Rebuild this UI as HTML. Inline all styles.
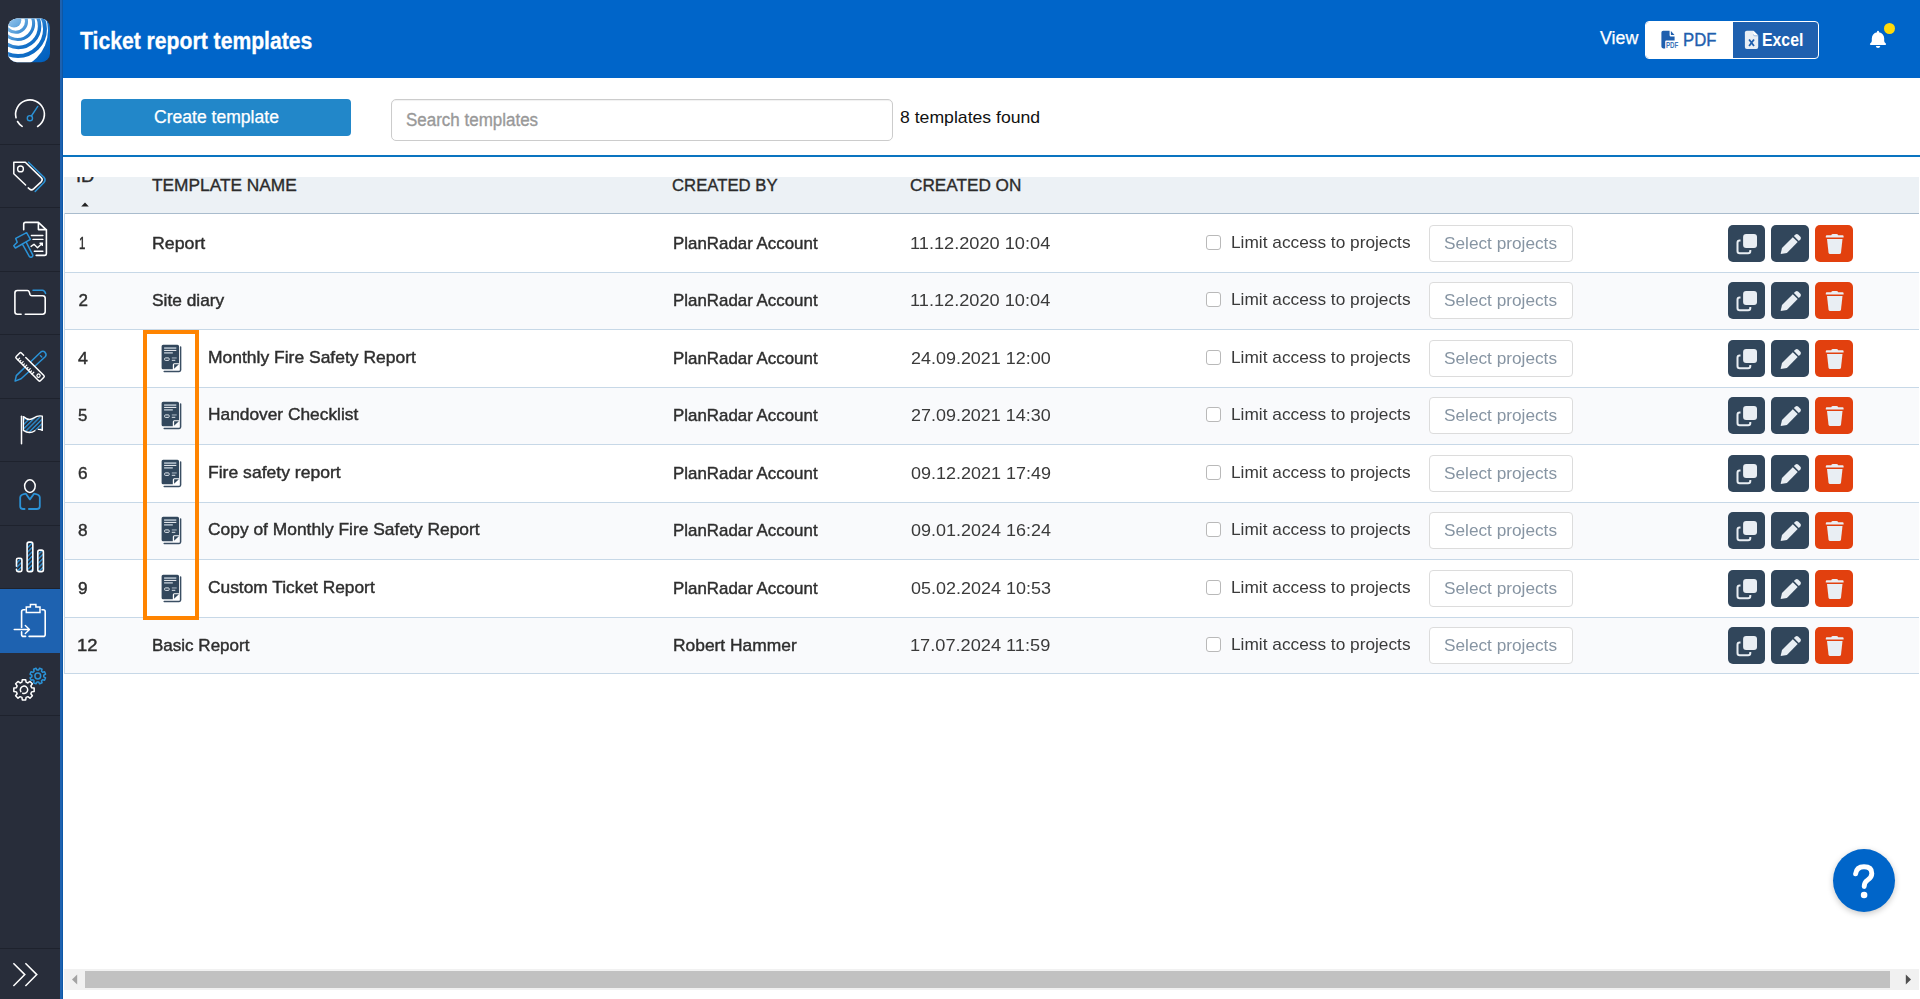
<!DOCTYPE html>
<html lang="en">
<head>
<meta charset="utf-8">
<title>Ticket report templates</title>
<style>
*{box-sizing:border-box;margin:0;padding:0}
html,body{width:1920px;height:999px;overflow:hidden;background:#fff;font-family:"Liberation Sans",sans-serif}
.abs,.t,.ln,.ic{position:absolute}
.t{white-space:pre;line-height:1;transform-origin:0 0;display:block}
/* sidebar */
#side{position:absolute;left:0;top:0;width:60px;height:999px;background:#282d3a}
#strip{position:absolute;left:60px;top:0;width:3px;height:999px;background:linear-gradient(90deg,#1e62b0 0,#1e62b0 2px,#0d57a6 2px,#0d57a6 3px)}
.sep{position:absolute;left:0;width:60px;height:1px;background:#1e222d}
#active{position:absolute;left:0;top:589px;width:62px;height:64px;background:#1e62b0}
.ic{overflow:visible}
/* header */
#top{position:absolute;left:63px;top:0;width:1857px;height:78px;background:#0065c9}
#toggle{position:absolute;left:1645px;top:21px;width:174px;height:38px;border:1px solid #fff;border-radius:4px;background:#1e60af;overflow:hidden}
#toggle .pdf{position:absolute;left:0;top:0;width:87px;height:36px;background:#fff}
/* toolbar */
#create{position:absolute;left:81px;top:99px;width:270px;height:37px;border-radius:4px;background:#2287c9}
#search{position:absolute;left:391px;top:99px;width:502px;height:42px;border:1px solid #ccc;border-radius:5px;background:#fff;box-shadow:inset 0 1px 1px rgba(0,0,0,.06)}
#rule{position:absolute;left:63px;top:155px;width:1857px;height:2px;background:#0a74c0}
/* table */
#thead{position:absolute;left:64px;top:177px;width:1855px;height:36px;background:#ecf1f5}
.ln{left:64px;width:1855px;height:1px;background:#c7d8e7}
.alt{position:absolute;left:65px;width:1854px;background:#f9fafc}
#lborder{position:absolute;left:64px;top:213px;width:1px;height:461px;background:#c7d8e7}
.cb{position:absolute;left:1206px;width:15px;height:15px;border:1px solid #b9b9b9;border-radius:3px;background:#fff}
.sel{position:absolute;left:1429px;width:144px;height:37px;border:1px solid #dcdcdc;border-radius:4px;background:#fff}
.btn{position:absolute;width:38px;height:37px;border-radius:5px;background:#31465b}
.btn.red{background:#e2400e}
#hl{position:absolute;left:143px;top:330px;width:56px;height:290px;border:4px solid #ff8400}
#rowtext{position:absolute;left:0;top:0;width:1px;height:1px;will-change:transform}
/* help */
#help{position:absolute;left:1833px;top:849px;width:62px;height:63px;border-radius:50%;background:#0065c9;box-shadow:0 2px 6px rgba(0,0,0,.22)}
/* scrollbar */
#sb{position:absolute;left:64px;top:969px;width:1855px;height:21px;background:#f1f1f1}
#sbt{position:absolute;left:85px;top:971px;width:1805px;height:17px;background:#c1c1c1}
</style>
</head>
<body>
<div id="side"></div><div id="strip"></div>
<div class="sep" style="top:144px"></div>
<div class="sep" style="top:207px"></div>
<div class="sep" style="top:271px"></div>
<div class="sep" style="top:334px"></div>
<div class="sep" style="top:398px"></div>
<div class="sep" style="top:461px"></div>
<div class="sep" style="top:525px"></div>
<div class="sep" style="top:588px"></div>
<div class="sep" style="top:715px"></div>
<div class="sep" style="top:948px"></div>
<div id="active"></div>
<svg class="ic" style="left:0;top:0" width="64" height="999" viewBox="0 0 64 999" fill="none" stroke-linecap="round" stroke-linejoin="round">
<defs>
<clipPath id="lgc"><rect x="8" y="18.6" width="42" height="43.6" rx="9" ry="9"/></clipPath>
<linearGradient id="lgg" gradientUnits="userSpaceOnUse" x1="10" y1="19" x2="46" y2="60">
<stop offset="0" stop-color="#8fc1ea"/><stop offset="0.22" stop-color="#5ea3dc"/><stop offset="0.5" stop-color="#1672c9"/><stop offset="1" stop-color="#0060bf"/></linearGradient>
<pattern id="hatch" patternUnits="userSpaceOnUse" width="3.1" height="3.1" patternTransform="rotate(-45)"><rect x="0" y="0" width="3.1" height="1.3" fill="#2b92d6"/></pattern>
</defs>
<g clip-path="url(#lgc)">
<rect x="7" y="17" width="45" height="47" fill="url(#lgg)"/>
<circle cx="9.7" cy="30.6" r="38.3" fill="#fff"/>
<circle cx="14.0" cy="20.3" r="7.3" fill="url(#lgg)"/>
<circle cx="18.00" cy="29.00" r="27.0" stroke="url(#lgg)" stroke-width="3.9"/>
<circle cx="18.40" cy="26.20" r="21.2" stroke="url(#lgg)" stroke-width="3.5"/>
<circle cx="17.70" cy="23.60" r="15.9" stroke="url(#lgg)" stroke-width="3.1"/>
<circle cx="15.70" cy="21.50" r="10.8" stroke="url(#lgg)" stroke-width="3.1"/>
</g>
<path d="M22.16 126.38A14.4 14.4 0 0 1 17.53 121.50M16.03 117.78A14.4 14.4 0 1 1 37.63 126.51" stroke="#fff" stroke-width="1.6"/>
<circle cx="29.9" cy="118.2" r="2.6" stroke="#2b92d6" stroke-width="1.4"/><path d="M31.4 116L37.8 106.4" stroke="#2b92d6" stroke-width="1.4"/>
<path d="M25.6 185L13.8 173.8V162.3H25.3L41.2 177.6Q43.2 179.6 41.4 181.6L33.6 188.9Q31.4 190.8 29.4 188.9L28.2 187.9" stroke="#fff" stroke-width="1.5"/>
<circle cx="20.5" cy="168.9" r="2.9" stroke="#fff" stroke-width="1.4"/>
<path d="M28.5 162.3L44 177.2Q46.2 179.8 44 182.4L35.2 191.4" stroke="#2b92d6" stroke-width="1.5"/>
<path d="M23.7 229.8V224.2Q23.7 222.4 25.5 222.4H38.4L46.4 229.8V253.6Q46.4 255.4 44.6 255.4H36.2M38.4 222.4V229.6H46.4" stroke="#fff" stroke-width="1.6"/>
<path d="M31.4 235.5H42.9M33 239.4H42.9M34.3 251.2H42.9M31.1 246.4L34 244.2L37.5 247.7L42.3 243.2M40 243.2H42.3V245.4" stroke="#fff" stroke-width="1.4"/>
<path d="M15.7 238.4L26.6 232.7L30.4 239.4L15.4 248L13.8 245.8L17.2 242.2ZM22.4 244.2L29.4 256.6Q30.4 257.8 31.8 257Q33.2 256.2 32.7 254.8L26.2 242.1" stroke="#2b92d6" stroke-width="1.5"/>
<path d="M21.1 314.2H17.4Q14.9 314.2 14.9 311.7V293Q14.9 290.5 17.4 290.5H27.4Q28.8 290.5 29.2 291.9L30 294.5Q30.4 295.7 31.7 295.7H42.6Q45.2 295.7 45.2 298.3V311.6Q45.2 314.2 42.6 314.2H25.3" stroke="#fff" stroke-width="1.6"/>
<path d="M33 290.3H42.4Q44.6 290.3 45.6 293.4" stroke="#2b92d6" stroke-width="1.5"/>
<path d="M16.3 375.6L40.6 352.2Q43 350.4 45.1 352.4Q47 354.6 45.2 356.8L21.1 378.8L15.1 381.1Z" stroke="#2b92d6" stroke-width="1.5"/>
<path d="M40.3 355.6L41.8 357" stroke="#2b92d6" stroke-width="1.3"/>
<g transform="translate(30.05 366.9) rotate(45)">
<rect x="-17.1" y="-3.65" width="34.2" height="7.3" rx="1.2" fill="#282d3a" stroke="none"/>
<path d="M-12.700000000000001 -3.65H-15.900000000000002Q-17.1 -3.65 -17.1 -2.45V2.45Q-17.1 3.65 -15.900000000000002 3.65H15.900000000000002Q17.1 3.65 17.1 2.45V-2.45Q17.1 -3.65 15.900000000000002 -3.65H-9.700000000000001" stroke="#fff" stroke-width="1.5"/>
<path d="M-13.6 3.65V1.1M-11.1 3.65V1.9M-8.6 3.65V1.1M-6.1 3.65V1.9M-3.6 3.65V1.1M-1.1 3.65V1.9M1.4 3.65V1.1M3.9 3.65V1.9M6.4 3.65V1.1" stroke="#fff" stroke-width="1.2"/>
<circle cx="12.2" cy="0.2" r="1.6" stroke="#fff" stroke-width="1.2"/>
</g>
<path d="M23.9 417.2Q28.8 421.6 33.5 418.5Q38 415.6 41.8 416.8V429.8Q38 428.4 34.9 430.4Q29.5 434 23.9 430Z" fill="url(#hatch)" stroke="none"/>
<path d="M21.5 416.2V443.8" stroke="#fff" stroke-width="1.5"/>
<path d="M34.9 430.7Q29.5 434.6 23.4 430.4V416.6Q28.8 421.3 33.5 418.2Q38.2 415 42.3 416.2V430.4Q40.4 429.2 38.4 429.4" stroke="#fff" stroke-width="1.4"/>
<ellipse cx="29.9" cy="486.1" rx="5.3" ry="6.3" stroke="#fff" stroke-width="1.5"/>
<path d="M24.6 509H22.9Q20.2 509 20.2 506.3V497.5Q20.2 494.6 25.9 493.7L29.9 499.4L34 493.7Q39.8 494.6 39.8 497.5V506.3Q39.8 509 37.1 509H28.9" stroke="#2b92d6" stroke-width="1.8"/>
<rect x="16.9" y="558.8" width="4.6" height="12.2" fill="url(#hatch)" stroke="none"/>
<rect x="27.5" y="542.6999999999999" width="4.9" height="28.3" fill="url(#hatch)" stroke="none"/>
<rect x="38.2" y="550.6999999999999" width="4.8" height="20.3" fill="url(#hatch)" stroke="none"/>
<path d="M16.5 566.2V559.8Q16.5 558.2 18.1 558.2H20.3Q21.9 558.2 21.9 559.8V570Q21.9 571.6 20.3 571.6H18.1Q16.5 571.6 16.5 570V569.2" stroke="#fff" stroke-width="1.6"/>
<rect x="27.1" y="542.1" width="5.7" height="29.5" rx="1.8" stroke="#fff" stroke-width="1.6"/>
<rect x="37.8" y="550.1" width="5.6" height="21.5" rx="1.8" stroke="#fff" stroke-width="1.6"/>
<path d="M21.6 627.4V611.8Q21.6 609.8 23.6 609.8H25M42 609.8H43.2Q45.2 609.8 45.2 611.8V634.4Q45.2 636.4 43.2 636.4H29.1M25.6 636.4H23.6Q21.6 636.4 21.6 634.4V631.9" stroke="#fff" stroke-width="1.6"/>
<path d="M26.3 612.4V606.9H30.4V604.6H35.9V606.9H40V612.4Z" stroke="#fff" stroke-width="1.5" stroke-linejoin="miter"/>
<path d="M14.2 629.5H29.3M25.3 625.5L29.5 629.5L25.3 633.5" stroke="#fff" stroke-width="1.4"/>
<path d="M21.92 682.18L22.31 679.64L25.69 679.64L26.08 682.18L27.91 682.94L29.99 681.42L32.38 683.81L30.86 685.89L31.62 687.72L34.16 688.11L34.16 691.49L31.62 691.88L30.86 693.71L32.38 695.79L29.99 698.18L27.91 696.66L26.08 697.42L25.69 699.96L22.31 699.96L21.92 697.42L20.09 696.66L18.01 698.18L15.62 695.79L17.14 693.71L16.38 691.88L13.84 691.49L13.84 688.11L16.38 687.72L17.14 685.89L15.62 683.81L18.01 681.42L20.09 682.94Z" stroke="#fff" stroke-width="1.5" stroke-linejoin="round"/>
<path d="M20.80 691.65A3.7 3.7 0 1 1 22.73 693.28" stroke="#fff" stroke-width="1.5"/>
<path d="M38.55 670.05L39.61 668.21L42.03 669.21L41.48 671.26L42.54 672.32L44.59 671.77L45.59 674.19L43.75 675.25L43.75 676.75L45.59 677.81L44.59 680.23L42.54 679.68L41.48 680.74L42.03 682.79L39.61 683.79L38.55 681.95L37.05 681.95L35.99 683.79L33.57 682.79L34.12 680.74L33.06 679.68L31.01 680.23L30.01 677.81L31.85 676.75L31.85 675.25L30.01 674.19L31.01 671.77L33.06 672.32L34.12 671.26L33.57 669.21L35.99 668.21L37.05 670.05Z" stroke="#2b92d6" stroke-width="1.5" stroke-linejoin="round"/>
<circle cx="37.8" cy="676" r="2.9" stroke="#2b92d6" stroke-width="1.5"/>
<path d="M13.4 963.2L24.8 974.6L13.4 986M25.4 963.2L36.8 974.6L25.4 986" stroke="#fff" stroke-width="1.5" stroke-linecap="butt" stroke-linejoin="miter"/>
</svg>
<div id="top"></div>
<div id="toggle"><div class="pdf"></div></div>
<svg class="ic" style="left:1660px;top:30px" width="20" height="20" viewBox="0 0 20 20">
<path d="M3.2 0.8H9.6V5.2Q9.6 6.4 10.8 6.4H14.6V10.4H6.2Q5.2 10.4 5.2 11.4V18.4H3.2Q1.4 18.4 1.4 16.6V2.6Q1.4 0.8 3.2 0.8Z" fill="#1f5fae"/>
<path d="M10.9 0.9L14.5 5.1H11.6Q10.9 5.1 10.9 4.4Z" fill="#1f5fae"/>
<text x="5.9" y="18.3" font-family="Liberation Sans, sans-serif" font-weight="700" font-size="8.200" fill="#3d76bb" textLength="12.400" lengthAdjust="spacingAndGlyphs">PDF</text>
</svg>
<svg class="ic" style="left:1744px;top:30px" width="16" height="20" viewBox="0 0 16 20">
<path d="M2.800 0.700H9.400L14.200 5.500V17Q14.200 18.900 12.300 18.900H2.800Q0.900 18.900 0.900 17V2.600Q0.900 0.700 2.800 0.700Z" fill="#e8eef5"/>
<path d="M9.400 0.700V4.400Q9.400 5.500 10.500 5.500H14.200Z" fill="#fff"/><path d="M9.400 4.400Q9.400 5.800 10.800 5.800H14.200" fill="none" stroke="#7ea3d2" stroke-width="0.700"/>
<path d="M5.100 9.500L10 16M10 9.500L5.100 16" stroke="#1f5fae" stroke-width="1.800" fill="none"/>
</svg>
<svg class="ic" style="left:1866px;top:28px" width="24" height="24" viewBox="0 0 24 24">
<path d="M12 2.800Q13 2.800 13 3.800V4.300Q18 5.500 18.200 10.500V13Q18.300 14.200 19.600 15.300Q20.400 16 20 16.600Q19.800 17 19.200 17H4.800Q4.200 17 4 16.600Q3.600 16 4.400 15.300Q5.700 14.200 5.800 13V10.500Q6 5.500 11 4.300V3.800Q11 2.800 12 2.800Z" fill="#fff"/>
<path d="M9.800 18H14.300Q14 20.100 12.050 20.100Q10.100 20.100 9.800 18Z" fill="#fff"/>
</svg>
<div class="abs" style="left:1884px;top:23px;width:11px;height:11px;border-radius:50%;background:#ffda0a"></div>
<div id="create"></div><div id="search"></div><div id="rule"></div>
<div id="thead"></div>
<div class="ln" style="top:213px;background:#a9bccd"></div>
<div class="alt" style="top:273px;height:57px"></div>
<div class="alt" style="top:388px;height:56px"></div>
<div class="alt" style="top:503px;height:57px"></div>
<div class="alt" style="top:618px;height:56px"></div>
<div class="ln" style="top:272px"></div>
<div class="ln" style="top:329px"></div>
<div class="ln" style="top:387px"></div>
<div class="ln" style="top:444px"></div>
<div class="ln" style="top:502px"></div>
<div class="ln" style="top:559px"></div>
<div class="ln" style="top:617px"></div>
<div class="ln" style="top:673px"></div>
<div id="lborder"></div>
<svg class="ic" style="left:81px;top:202px" width="8" height="5" viewBox="0 0 8 5"><path d="M0.2 4.4L4 0.5L7.8 4.4Z" fill="#222"/></svg>
<div class="cb" style="top:235px"></div>
<div class="sel" style="top:225px"></div>
<div class="btn" style="left:1728px;top:225px;width:37px"><svg width="37" height="37" viewBox="0.5 0 37 37" style="display:block"><rect x="15.6" y="9.100" width="13.900" height="14" rx="3" fill="#e9eef3"/><path d="M13 15.600H12.200Q10 15.600 10 17.800V26Q10 28.200 12.200 28.200H20.600Q22.800 28.200 22.800 26V25" fill="none" stroke="#e9eef3" stroke-width="2"/></svg></div>
<div class="btn" style="left:1771px;top:225px"><svg width="38" height="37" viewBox="0 0 38 37" style="display:block"><path d="M9.600 29.100L11 23L21.800 12.200L26.700 17.100L15.900 27.900Z" fill="#e9eef3"/><path d="M22.900 11.100L24.500 9.500Q25.800 8.300 27.100 9.500L29.400 11.800Q30.600 13.100 29.400 14.400L27.800 16Z" fill="#e9eef3"/></svg></div>
<div class="btn red" style="left:1815px;top:225px"><svg width="38" height="37" viewBox="0 0 38 37" style="display:block"><path d="M10.800 12.600V11.300Q10.800 10.300 11.800 10.300H16.200Q16.600 8.900 18 8.900H21.400Q22.800 8.900 23.200 10.300H27.600Q28.600 10.300 28.600 11.300V12.600Z" fill="#e9eef3"/><path d="M12 14.100H27.500L26 27.400Q25.800 28.900 24.300 28.900H15.200Q13.700 28.900 13.500 27.400Z" fill="#e9eef3"/></svg></div>
<div class="cb" style="top:292px"></div>
<div class="sel" style="top:282px"></div>
<div class="btn" style="left:1728px;top:282px;width:37px"><svg width="37" height="37" viewBox="0.5 0 37 37" style="display:block"><rect x="15.6" y="9.100" width="13.900" height="14" rx="3" fill="#e9eef3"/><path d="M13 15.600H12.200Q10 15.600 10 17.800V26Q10 28.200 12.200 28.200H20.600Q22.800 28.200 22.800 26V25" fill="none" stroke="#e9eef3" stroke-width="2"/></svg></div>
<div class="btn" style="left:1771px;top:282px"><svg width="38" height="37" viewBox="0 0 38 37" style="display:block"><path d="M9.600 29.100L11 23L21.800 12.200L26.700 17.100L15.900 27.900Z" fill="#e9eef3"/><path d="M22.900 11.100L24.500 9.500Q25.800 8.300 27.100 9.500L29.400 11.800Q30.600 13.100 29.400 14.400L27.800 16Z" fill="#e9eef3"/></svg></div>
<div class="btn red" style="left:1815px;top:282px"><svg width="38" height="37" viewBox="0 0 38 37" style="display:block"><path d="M10.800 12.600V11.300Q10.800 10.300 11.800 10.300H16.200Q16.600 8.900 18 8.900H21.400Q22.800 8.900 23.200 10.300H27.600Q28.600 10.300 28.600 11.300V12.600Z" fill="#e9eef3"/><path d="M12 14.100H27.500L26 27.400Q25.800 28.900 24.300 28.900H15.200Q13.700 28.900 13.500 27.400Z" fill="#e9eef3"/></svg></div>
<div class="cb" style="top:350px"></div>
<div class="sel" style="top:340px"></div>
<div class="btn" style="left:1728px;top:340px;width:37px"><svg width="37" height="37" viewBox="0.5 0 37 37" style="display:block"><rect x="15.6" y="9.100" width="13.900" height="14" rx="3" fill="#e9eef3"/><path d="M13 15.600H12.200Q10 15.600 10 17.800V26Q10 28.200 12.200 28.200H20.600Q22.800 28.200 22.800 26V25" fill="none" stroke="#e9eef3" stroke-width="2"/></svg></div>
<div class="btn" style="left:1771px;top:340px"><svg width="38" height="37" viewBox="0 0 38 37" style="display:block"><path d="M9.600 29.100L11 23L21.800 12.200L26.700 17.100L15.900 27.900Z" fill="#e9eef3"/><path d="M22.900 11.100L24.500 9.500Q25.800 8.300 27.100 9.500L29.400 11.800Q30.600 13.100 29.400 14.400L27.800 16Z" fill="#e9eef3"/></svg></div>
<div class="btn red" style="left:1815px;top:340px"><svg width="38" height="37" viewBox="0 0 38 37" style="display:block"><path d="M10.800 12.600V11.300Q10.800 10.300 11.800 10.300H16.200Q16.600 8.900 18 8.900H21.400Q22.800 8.900 23.200 10.300H27.600Q28.600 10.300 28.600 11.300V12.600Z" fill="#e9eef3"/><path d="M12 14.100H27.500L26 27.400Q25.800 28.900 24.300 28.900H15.200Q13.700 28.900 13.500 27.400Z" fill="#e9eef3"/></svg></div>
<svg class="ic" style="left:161px;top:344px" width="22" height="29" viewBox="0 0 22 29"><path d="M19.600 3V26Q19.600 27.400 18.200 27.400H3.200" fill="none" stroke="#3a4e63" stroke-width="1.500" stroke-linecap="round"/><path d="M2.100 0.800H16.500Q18 0.800 18 2.300V19.300H13.300Q11.800 19.300 11.800 20.800V25.300H2.100Q0.600 25.300 0.600 23.800V2.300Q0.600 0.800 2.100 0.800Z" fill="#32475c"/><path d="M13.100 20.300H17.900L13.100 24.700Z" fill="#32475c"/>
<rect x="3.100" y="3.200" width="12.200" height="1.800" fill="#a4b1be"/><rect x="3.100" y="5.900" width="12.200" height="1" fill="#f4f6f9"/><rect x="3.100" y="8" width="8.700" height="1.700" fill="#a4b1be"/><rect x="3.600" y="13.900" width="4.600" height="2.500" rx="0.900" fill="none" stroke="#e1e6ec" stroke-width="1"/><rect x="10.800" y="13.400" width="4.900" height="1.100" fill="#a4b1be"/><rect x="10.800" y="15.800" width="3.500" height="1" fill="#e1e6ec"/></svg>
<div class="cb" style="top:407px"></div>
<div class="sel" style="top:397px"></div>
<div class="btn" style="left:1728px;top:397px;width:37px"><svg width="37" height="37" viewBox="0.5 0 37 37" style="display:block"><rect x="15.6" y="9.100" width="13.900" height="14" rx="3" fill="#e9eef3"/><path d="M13 15.600H12.200Q10 15.600 10 17.800V26Q10 28.200 12.200 28.200H20.600Q22.800 28.200 22.800 26V25" fill="none" stroke="#e9eef3" stroke-width="2"/></svg></div>
<div class="btn" style="left:1771px;top:397px"><svg width="38" height="37" viewBox="0 0 38 37" style="display:block"><path d="M9.600 29.100L11 23L21.800 12.200L26.700 17.100L15.900 27.900Z" fill="#e9eef3"/><path d="M22.900 11.100L24.500 9.500Q25.800 8.300 27.100 9.500L29.400 11.800Q30.600 13.100 29.400 14.400L27.800 16Z" fill="#e9eef3"/></svg></div>
<div class="btn red" style="left:1815px;top:397px"><svg width="38" height="37" viewBox="0 0 38 37" style="display:block"><path d="M10.800 12.600V11.300Q10.800 10.300 11.800 10.300H16.200Q16.600 8.900 18 8.900H21.400Q22.800 8.900 23.200 10.300H27.600Q28.600 10.300 28.600 11.300V12.600Z" fill="#e9eef3"/><path d="M12 14.100H27.500L26 27.400Q25.800 28.900 24.300 28.900H15.200Q13.700 28.900 13.500 27.400Z" fill="#e9eef3"/></svg></div>
<svg class="ic" style="left:161px;top:401px" width="22" height="29" viewBox="0 0 22 29"><path d="M19.600 3V26Q19.600 27.400 18.200 27.400H3.200" fill="none" stroke="#3a4e63" stroke-width="1.500" stroke-linecap="round"/><path d="M2.100 0.800H16.500Q18 0.800 18 2.300V19.300H13.300Q11.800 19.300 11.800 20.800V25.300H2.100Q0.600 25.300 0.600 23.800V2.300Q0.600 0.800 2.100 0.800Z" fill="#32475c"/><path d="M13.100 20.300H17.900L13.100 24.700Z" fill="#32475c"/>
<rect x="3.100" y="3.200" width="12.200" height="1.800" fill="#a4b1be"/><rect x="3.100" y="5.900" width="12.200" height="1" fill="#f4f6f9"/><rect x="3.100" y="8" width="8.700" height="1.700" fill="#a4b1be"/><rect x="3.600" y="13.900" width="4.600" height="2.500" rx="0.900" fill="none" stroke="#e1e6ec" stroke-width="1"/><rect x="10.800" y="13.400" width="4.900" height="1.100" fill="#a4b1be"/><rect x="10.800" y="15.800" width="3.500" height="1" fill="#e1e6ec"/></svg>
<div class="cb" style="top:465px"></div>
<div class="sel" style="top:455px"></div>
<div class="btn" style="left:1728px;top:455px;width:37px"><svg width="37" height="37" viewBox="0.5 0 37 37" style="display:block"><rect x="15.6" y="9.100" width="13.900" height="14" rx="3" fill="#e9eef3"/><path d="M13 15.600H12.200Q10 15.600 10 17.800V26Q10 28.200 12.200 28.200H20.600Q22.800 28.200 22.800 26V25" fill="none" stroke="#e9eef3" stroke-width="2"/></svg></div>
<div class="btn" style="left:1771px;top:455px"><svg width="38" height="37" viewBox="0 0 38 37" style="display:block"><path d="M9.600 29.100L11 23L21.800 12.200L26.700 17.100L15.900 27.900Z" fill="#e9eef3"/><path d="M22.900 11.100L24.500 9.500Q25.800 8.300 27.100 9.500L29.400 11.800Q30.600 13.100 29.400 14.400L27.800 16Z" fill="#e9eef3"/></svg></div>
<div class="btn red" style="left:1815px;top:455px"><svg width="38" height="37" viewBox="0 0 38 37" style="display:block"><path d="M10.800 12.600V11.300Q10.800 10.300 11.800 10.300H16.200Q16.600 8.900 18 8.900H21.400Q22.800 8.900 23.200 10.300H27.600Q28.600 10.300 28.600 11.300V12.600Z" fill="#e9eef3"/><path d="M12 14.100H27.500L26 27.400Q25.800 28.900 24.300 28.900H15.200Q13.700 28.900 13.500 27.400Z" fill="#e9eef3"/></svg></div>
<svg class="ic" style="left:161px;top:459px" width="22" height="29" viewBox="0 0 22 29"><path d="M19.600 3V26Q19.600 27.400 18.200 27.400H3.200" fill="none" stroke="#3a4e63" stroke-width="1.500" stroke-linecap="round"/><path d="M2.100 0.800H16.500Q18 0.800 18 2.300V19.300H13.300Q11.800 19.300 11.800 20.800V25.300H2.100Q0.600 25.300 0.600 23.800V2.300Q0.600 0.800 2.100 0.800Z" fill="#32475c"/><path d="M13.100 20.300H17.900L13.100 24.700Z" fill="#32475c"/>
<rect x="3.100" y="3.200" width="12.200" height="1.800" fill="#a4b1be"/><rect x="3.100" y="5.900" width="12.200" height="1" fill="#f4f6f9"/><rect x="3.100" y="8" width="8.700" height="1.700" fill="#a4b1be"/><rect x="3.600" y="13.900" width="4.600" height="2.500" rx="0.900" fill="none" stroke="#e1e6ec" stroke-width="1"/><rect x="10.800" y="13.400" width="4.900" height="1.100" fill="#a4b1be"/><rect x="10.800" y="15.800" width="3.500" height="1" fill="#e1e6ec"/></svg>
<div class="cb" style="top:522px"></div>
<div class="sel" style="top:512px"></div>
<div class="btn" style="left:1728px;top:512px;width:37px"><svg width="37" height="37" viewBox="0.5 0 37 37" style="display:block"><rect x="15.6" y="9.100" width="13.900" height="14" rx="3" fill="#e9eef3"/><path d="M13 15.600H12.200Q10 15.600 10 17.800V26Q10 28.200 12.200 28.200H20.600Q22.800 28.200 22.800 26V25" fill="none" stroke="#e9eef3" stroke-width="2"/></svg></div>
<div class="btn" style="left:1771px;top:512px"><svg width="38" height="37" viewBox="0 0 38 37" style="display:block"><path d="M9.600 29.100L11 23L21.800 12.200L26.700 17.100L15.900 27.900Z" fill="#e9eef3"/><path d="M22.900 11.100L24.500 9.500Q25.800 8.300 27.100 9.500L29.400 11.800Q30.600 13.100 29.400 14.400L27.800 16Z" fill="#e9eef3"/></svg></div>
<div class="btn red" style="left:1815px;top:512px"><svg width="38" height="37" viewBox="0 0 38 37" style="display:block"><path d="M10.800 12.600V11.300Q10.800 10.300 11.800 10.300H16.200Q16.600 8.900 18 8.900H21.400Q22.800 8.900 23.200 10.300H27.600Q28.600 10.300 28.600 11.300V12.600Z" fill="#e9eef3"/><path d="M12 14.100H27.500L26 27.400Q25.800 28.900 24.300 28.900H15.200Q13.700 28.900 13.500 27.400Z" fill="#e9eef3"/></svg></div>
<svg class="ic" style="left:161px;top:516px" width="22" height="29" viewBox="0 0 22 29"><path d="M19.600 3V26Q19.600 27.400 18.200 27.400H3.200" fill="none" stroke="#3a4e63" stroke-width="1.500" stroke-linecap="round"/><path d="M2.100 0.800H16.500Q18 0.800 18 2.300V19.300H13.300Q11.800 19.300 11.800 20.800V25.300H2.100Q0.600 25.300 0.600 23.800V2.300Q0.600 0.800 2.100 0.800Z" fill="#32475c"/><path d="M13.100 20.300H17.900L13.100 24.700Z" fill="#32475c"/>
<rect x="3.100" y="3.200" width="12.200" height="1.800" fill="#a4b1be"/><rect x="3.100" y="5.900" width="12.200" height="1" fill="#f4f6f9"/><rect x="3.100" y="8" width="8.700" height="1.700" fill="#a4b1be"/><rect x="3.600" y="13.900" width="4.600" height="2.500" rx="0.900" fill="none" stroke="#e1e6ec" stroke-width="1"/><rect x="10.800" y="13.400" width="4.900" height="1.100" fill="#a4b1be"/><rect x="10.800" y="15.800" width="3.500" height="1" fill="#e1e6ec"/></svg>
<div class="cb" style="top:580px"></div>
<div class="sel" style="top:570px"></div>
<div class="btn" style="left:1728px;top:570px;width:37px"><svg width="37" height="37" viewBox="0.5 0 37 37" style="display:block"><rect x="15.6" y="9.100" width="13.900" height="14" rx="3" fill="#e9eef3"/><path d="M13 15.600H12.200Q10 15.600 10 17.800V26Q10 28.200 12.200 28.200H20.600Q22.800 28.200 22.800 26V25" fill="none" stroke="#e9eef3" stroke-width="2"/></svg></div>
<div class="btn" style="left:1771px;top:570px"><svg width="38" height="37" viewBox="0 0 38 37" style="display:block"><path d="M9.600 29.100L11 23L21.800 12.200L26.700 17.100L15.900 27.900Z" fill="#e9eef3"/><path d="M22.900 11.100L24.500 9.500Q25.800 8.300 27.100 9.500L29.400 11.800Q30.600 13.100 29.400 14.400L27.800 16Z" fill="#e9eef3"/></svg></div>
<div class="btn red" style="left:1815px;top:570px"><svg width="38" height="37" viewBox="0 0 38 37" style="display:block"><path d="M10.800 12.600V11.300Q10.800 10.300 11.800 10.300H16.200Q16.600 8.900 18 8.900H21.400Q22.800 8.900 23.200 10.300H27.600Q28.600 10.300 28.600 11.300V12.600Z" fill="#e9eef3"/><path d="M12 14.100H27.500L26 27.400Q25.800 28.900 24.300 28.900H15.200Q13.700 28.900 13.500 27.400Z" fill="#e9eef3"/></svg></div>
<svg class="ic" style="left:161px;top:574px" width="22" height="29" viewBox="0 0 22 29"><path d="M19.600 3V26Q19.600 27.400 18.200 27.400H3.200" fill="none" stroke="#3a4e63" stroke-width="1.500" stroke-linecap="round"/><path d="M2.100 0.800H16.500Q18 0.800 18 2.300V19.300H13.300Q11.800 19.300 11.800 20.800V25.300H2.100Q0.600 25.300 0.600 23.800V2.300Q0.600 0.800 2.100 0.800Z" fill="#32475c"/><path d="M13.100 20.300H17.900L13.100 24.700Z" fill="#32475c"/>
<rect x="3.100" y="3.200" width="12.200" height="1.800" fill="#a4b1be"/><rect x="3.100" y="5.900" width="12.200" height="1" fill="#f4f6f9"/><rect x="3.100" y="8" width="8.700" height="1.700" fill="#a4b1be"/><rect x="3.600" y="13.900" width="4.600" height="2.500" rx="0.900" fill="none" stroke="#e1e6ec" stroke-width="1"/><rect x="10.800" y="13.400" width="4.900" height="1.100" fill="#a4b1be"/><rect x="10.800" y="15.800" width="3.500" height="1" fill="#e1e6ec"/></svg>
<div class="cb" style="top:637px"></div>
<div class="sel" style="top:627px"></div>
<div class="btn" style="left:1728px;top:627px;width:37px"><svg width="37" height="37" viewBox="0.5 0 37 37" style="display:block"><rect x="15.6" y="9.100" width="13.900" height="14" rx="3" fill="#e9eef3"/><path d="M13 15.600H12.200Q10 15.600 10 17.800V26Q10 28.200 12.200 28.200H20.600Q22.800 28.200 22.800 26V25" fill="none" stroke="#e9eef3" stroke-width="2"/></svg></div>
<div class="btn" style="left:1771px;top:627px"><svg width="38" height="37" viewBox="0 0 38 37" style="display:block"><path d="M9.600 29.100L11 23L21.800 12.200L26.700 17.100L15.900 27.900Z" fill="#e9eef3"/><path d="M22.900 11.100L24.500 9.500Q25.800 8.300 27.100 9.500L29.400 11.800Q30.600 13.100 29.400 14.400L27.800 16Z" fill="#e9eef3"/></svg></div>
<div class="btn red" style="left:1815px;top:627px"><svg width="38" height="37" viewBox="0 0 38 37" style="display:block"><path d="M10.800 12.600V11.300Q10.800 10.300 11.800 10.300H16.200Q16.600 8.900 18 8.900H21.400Q22.800 8.900 23.200 10.300H27.600Q28.600 10.300 28.600 11.300V12.600Z" fill="#e9eef3"/><path d="M12 14.100H27.500L26 27.400Q25.800 28.900 24.300 28.900H15.200Q13.700 28.900 13.500 27.400Z" fill="#e9eef3"/></svg></div>
<div id="hl"></div>
<span class="t" style="left:80.30px;top:30.00px;font-size:23px;font-weight:700;color:#fff;transform:scaleX(0.9195);-webkit-text-stroke:0.3px #fff;">Ticket report templates</span>
<span class="t" style="left:1600.10px;top:29.00px;font-size:18px;font-weight:400;color:#fff;transform:scaleX(0.9902);-webkit-text-stroke:0.25px #fff;">View</span>
<span class="t" style="left:1683.47px;top:31.00px;font-size:18px;font-weight:400;color:#1f5fae;transform:scaleX(0.9284);-webkit-text-stroke:0.4px #1f5fae;">PDF</span>
<span class="t" style="left:1762.32px;top:31.00px;font-size:18px;font-weight:700;color:#fff;transform:scaleX(0.8793);">Excel</span>
<span class="t" style="left:154.30px;top:109.00px;font-size:17.5px;font-weight:400;color:#fff;transform:scaleX(1.0034);-webkit-text-stroke:0.25px #fff;">Create template</span>
<span class="t" style="left:406.40px;top:111.00px;font-size:18px;font-weight:400;color:#999;transform:scaleX(0.9431);-webkit-text-stroke:0.35px #999;">Search templates</span>
<span class="t" style="left:899.90px;top:109.00px;font-size:17px;font-weight:400;color:#111;transform:scaleX(1.0372);">8 templates found</span>
<span class="t" style="left:151.60px;top:177.00px;font-size:17px;font-weight:400;color:#2b2b2b;transform:scaleX(1.0171);-webkit-text-stroke:0.35px #2b2b2b;">TEMPLATE NAME</span>
<span class="t" style="left:672.10px;top:177.00px;font-size:17px;font-weight:400;color:#2b2b2b;transform:scaleX(0.9829);-webkit-text-stroke:0.35px #2b2b2b;">CREATED BY</span>
<span class="t" style="left:909.90px;top:177.00px;font-size:17px;font-weight:400;color:#2b2b2b;transform:scaleX(1.0109);-webkit-text-stroke:0.35px #2b2b2b;">CREATED ON</span>
<span class="t" style="left:75.82px;top:168.00px;font-size:17px;font-weight:400;color:#2b2b2b;transform:scaleX(1.0812);-webkit-text-stroke:0.35px #2b2b2b;clip-path:inset(9px -2px -2px -2px);">ID</span>
<div id="rowtext">
<span class="t" style="left:79.12px;top:235.00px;font-size:17px;font-weight:400;color:#2e2e2e;transform:scaleX(0.6750);-webkit-text-stroke:0.42px #2e2e2e;">1</span>
<span class="t" style="left:151.56px;top:235.00px;font-size:17px;font-weight:400;color:#2e2e2e;transform:scaleX(1.0437);-webkit-text-stroke:0.42px #2e2e2e;">Report</span>
<span class="t" style="left:673.01px;top:235.00px;font-size:17px;font-weight:400;color:#2e2e2e;transform:scaleX(0.9935);-webkit-text-stroke:0.42px #2e2e2e;">PlanRadar Account</span>
<span class="t" style="left:910.43px;top:235.00px;font-size:17px;font-weight:400;color:#3a3a3a;transform:scaleX(1.0700);">11.12.2020 10:04</span>
<span class="t" style="left:1230.78px;top:234.00px;font-size:17px;font-weight:400;color:#3a3a3a;transform:scaleX(1.0161);">Limit access to projects</span>
<span class="t" style="left:1444.10px;top:235.00px;font-size:17px;font-weight:400;color:#8795a3;transform:scaleX(1.0135);">Select projects</span>
<span class="t" style="left:78.40px;top:292.00px;font-size:17px;font-weight:400;color:#2e2e2e;transform:scaleX(1.0000);-webkit-text-stroke:0.42px #2e2e2e;">2</span>
<span class="t" style="left:151.70px;top:292.00px;font-size:17px;font-weight:400;color:#2e2e2e;transform:scaleX(1.0187);-webkit-text-stroke:0.42px #2e2e2e;">Site diary</span>
<span class="t" style="left:673.01px;top:292.00px;font-size:17px;font-weight:400;color:#2e2e2e;transform:scaleX(0.9935);-webkit-text-stroke:0.42px #2e2e2e;">PlanRadar Account</span>
<span class="t" style="left:910.43px;top:292.00px;font-size:17px;font-weight:400;color:#3a3a3a;transform:scaleX(1.0700);">11.12.2020 10:04</span>
<span class="t" style="left:1230.78px;top:291.00px;font-size:17px;font-weight:400;color:#3a3a3a;transform:scaleX(1.0161);">Limit access to projects</span>
<span class="t" style="left:1444.10px;top:292.00px;font-size:17px;font-weight:400;color:#8795a3;transform:scaleX(1.0135);">Select projects</span>
<span class="t" style="left:78.40px;top:350.00px;font-size:17px;font-weight:400;color:#2e2e2e;transform:scaleX(1.0444);-webkit-text-stroke:0.42px #2e2e2e;">4</span>
<span class="t" style="left:207.97px;top:349.00px;font-size:17px;font-weight:400;color:#2e2e2e;transform:scaleX(1.0280);-webkit-text-stroke:0.42px #2e2e2e;">Monthly Fire Safety Report</span>
<span class="t" style="left:673.01px;top:350.00px;font-size:17px;font-weight:400;color:#2e2e2e;transform:scaleX(0.9935);-webkit-text-stroke:0.42px #2e2e2e;">PlanRadar Account</span>
<span class="t" style="left:911.00px;top:350.00px;font-size:17px;font-weight:400;color:#3a3a3a;transform:scaleX(1.0554);">24.09.2021 12:00</span>
<span class="t" style="left:1230.78px;top:349.00px;font-size:17px;font-weight:400;color:#3a3a3a;transform:scaleX(1.0161);">Limit access to projects</span>
<span class="t" style="left:1444.10px;top:350.00px;font-size:17px;font-weight:400;color:#8795a3;transform:scaleX(1.0135);">Select projects</span>
<span class="t" style="left:78.40px;top:407.00px;font-size:17px;font-weight:400;color:#2e2e2e;transform:scaleX(0.9889);-webkit-text-stroke:0.42px #2e2e2e;">5</span>
<span class="t" style="left:207.98px;top:406.00px;font-size:17px;font-weight:400;color:#2e2e2e;transform:scaleX(1.0193);-webkit-text-stroke:0.42px #2e2e2e;">Handover Checklist</span>
<span class="t" style="left:673.01px;top:407.00px;font-size:17px;font-weight:400;color:#2e2e2e;transform:scaleX(0.9935);-webkit-text-stroke:0.42px #2e2e2e;">PlanRadar Account</span>
<span class="t" style="left:911.00px;top:407.00px;font-size:17px;font-weight:400;color:#3a3a3a;transform:scaleX(1.0554);">27.09.2021 14:30</span>
<span class="t" style="left:1230.78px;top:406.00px;font-size:17px;font-weight:400;color:#3a3a3a;transform:scaleX(1.0161);">Limit access to projects</span>
<span class="t" style="left:1444.10px;top:407.00px;font-size:17px;font-weight:400;color:#8795a3;transform:scaleX(1.0135);">Select projects</span>
<span class="t" style="left:78.40px;top:465.00px;font-size:17px;font-weight:400;color:#2e2e2e;transform:scaleX(1.0111);-webkit-text-stroke:0.42px #2e2e2e;">6</span>
<span class="t" style="left:207.97px;top:464.00px;font-size:17px;font-weight:400;color:#2e2e2e;transform:scaleX(1.0324);-webkit-text-stroke:0.42px #2e2e2e;">Fire safety report</span>
<span class="t" style="left:673.01px;top:465.00px;font-size:17px;font-weight:400;color:#2e2e2e;transform:scaleX(0.9935);-webkit-text-stroke:0.42px #2e2e2e;">PlanRadar Account</span>
<span class="t" style="left:910.70px;top:465.00px;font-size:17px;font-weight:400;color:#3a3a3a;transform:scaleX(1.0577);">09.12.2021 17:49</span>
<span class="t" style="left:1230.78px;top:464.00px;font-size:17px;font-weight:400;color:#3a3a3a;transform:scaleX(1.0161);">Limit access to projects</span>
<span class="t" style="left:1444.10px;top:465.00px;font-size:17px;font-weight:400;color:#8795a3;transform:scaleX(1.0135);">Select projects</span>
<span class="t" style="left:78.40px;top:522.00px;font-size:17px;font-weight:400;color:#2e2e2e;transform:scaleX(1.0111);-webkit-text-stroke:0.42px #2e2e2e;">8</span>
<span class="t" style="left:208.20px;top:521.00px;font-size:17px;font-weight:400;color:#2e2e2e;transform:scaleX(1.0230);-webkit-text-stroke:0.42px #2e2e2e;">Copy of Monthly Fire Safety Report</span>
<span class="t" style="left:673.01px;top:522.00px;font-size:17px;font-weight:400;color:#2e2e2e;transform:scaleX(0.9935);-webkit-text-stroke:0.42px #2e2e2e;">PlanRadar Account</span>
<span class="t" style="left:910.70px;top:522.00px;font-size:17px;font-weight:400;color:#3a3a3a;transform:scaleX(1.0577);">09.01.2024 16:24</span>
<span class="t" style="left:1230.78px;top:521.00px;font-size:17px;font-weight:400;color:#3a3a3a;transform:scaleX(1.0161);">Limit access to projects</span>
<span class="t" style="left:1444.10px;top:522.00px;font-size:17px;font-weight:400;color:#8795a3;transform:scaleX(1.0135);">Select projects</span>
<span class="t" style="left:78.40px;top:580.00px;font-size:17px;font-weight:400;color:#2e2e2e;transform:scaleX(1.0111);-webkit-text-stroke:0.42px #2e2e2e;">9</span>
<span class="t" style="left:208.20px;top:579.00px;font-size:17px;font-weight:400;color:#2e2e2e;transform:scaleX(1.0200);-webkit-text-stroke:0.42px #2e2e2e;">Custom Ticket Report</span>
<span class="t" style="left:673.01px;top:580.00px;font-size:17px;font-weight:400;color:#2e2e2e;transform:scaleX(0.9935);-webkit-text-stroke:0.42px #2e2e2e;">PlanRadar Account</span>
<span class="t" style="left:910.70px;top:580.00px;font-size:17px;font-weight:400;color:#3a3a3a;transform:scaleX(1.0577);">05.02.2024 10:53</span>
<span class="t" style="left:1230.78px;top:579.00px;font-size:17px;font-weight:400;color:#3a3a3a;transform:scaleX(1.0161);">Limit access to projects</span>
<span class="t" style="left:1444.10px;top:580.00px;font-size:17px;font-weight:400;color:#8795a3;transform:scaleX(1.0135);">Select projects</span>
<span class="t" style="left:77.32px;top:637.00px;font-size:17px;font-weight:400;color:#2e2e2e;transform:scaleX(1.0828);-webkit-text-stroke:0.42px #2e2e2e;">12</span>
<span class="t" style="left:151.70px;top:637.00px;font-size:17px;font-weight:400;color:#2e2e2e;transform:scaleX(1.0011);-webkit-text-stroke:0.42px #2e2e2e;">Basic Report</span>
<span class="t" style="left:672.98px;top:637.00px;font-size:17px;font-weight:400;color:#2e2e2e;transform:scaleX(1.0228);-webkit-text-stroke:0.42px #2e2e2e;">Robert Hammer</span>
<span class="t" style="left:910.43px;top:637.00px;font-size:17px;font-weight:400;color:#3a3a3a;transform:scaleX(1.0700);">17.07.2024 11:59</span>
<span class="t" style="left:1230.78px;top:636.00px;font-size:17px;font-weight:400;color:#3a3a3a;transform:scaleX(1.0161);">Limit access to projects</span>
<span class="t" style="left:1444.10px;top:637.00px;font-size:17px;font-weight:400;color:#8795a3;transform:scaleX(1.0135);">Select projects</span>
</div>
<div id="help"></div>
<svg class="ic" style="left:1850px;top:862px" width="28" height="38" viewBox="0 0 28 38"><path d="M5.600 11.800Q6.600 4.800 14 4.800Q21.800 4.800 21.800 11.400Q21.800 15.400 17.400 18.200Q14.200 20.300 14.200 24.600" fill="none" stroke="#fff" stroke-width="4.900" stroke-linecap="round"/><circle cx="14.100" cy="33" r="3.300" fill="#fff"/></svg>
<div id="sb"></div><div id="sbt"></div>
<svg class="ic" style="left:71px;top:973px" width="8" height="13" viewBox="0 0 8 13"><path d="M6.200 1.400V11.600L1 6.500Z" fill="#a3a3a3"/></svg>
<svg class="ic" style="left:1904px;top:973px" width="8" height="13" viewBox="0 0 8 13"><path d="M1.800 1.400V11.600L7 6.500Z" fill="#505050"/></svg>
</body>
</html>
